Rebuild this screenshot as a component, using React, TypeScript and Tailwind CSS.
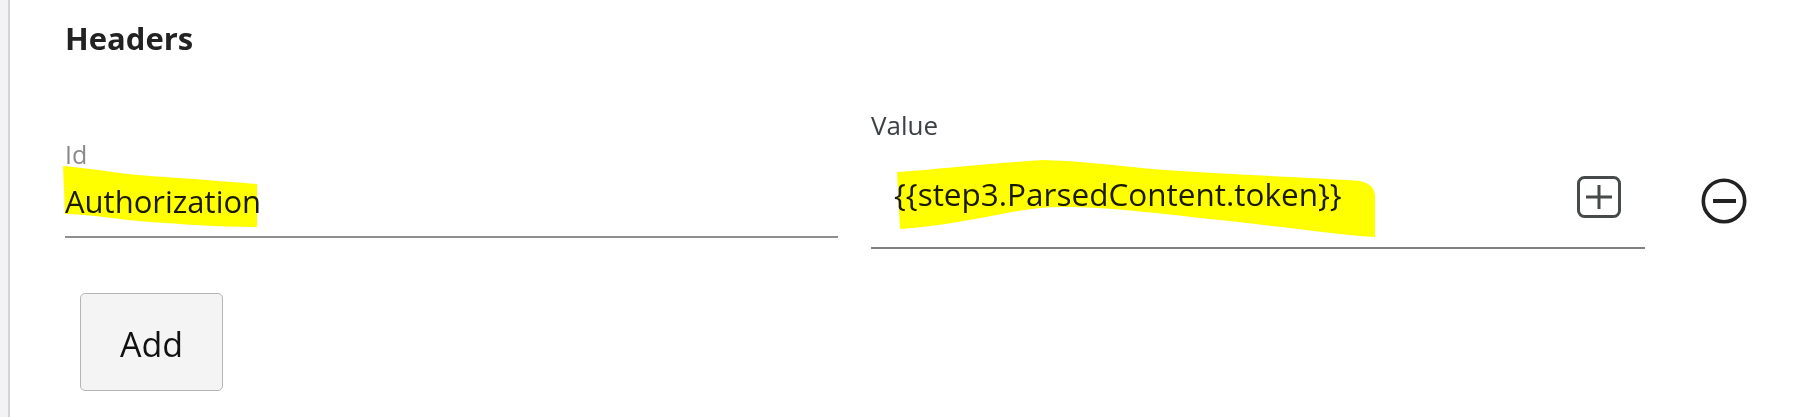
import React from 'react';

function Highlights() {
  return (
    <svg
      className="pointer-events-none absolute left-0 top-0 h-[417px] w-[1814px] mix-blend-multiply"
      viewBox="0 0 1814 417"
    >
      <path
        d="M63,166 C90,168 120,174 150,176 S220,181 257,184 L257,227 C220,227 180,224 150,222 S90,214 65,214 Z"
        fill="#ffff00"
      />
      <path
        d="M897,172 C930,170 980,164 1043,160 C1090,161 1130,168 1180,171 C1260,176 1320,178 1360,181 Q1375,184 1375,197 L1375,237 C1330,234 1280,226 1200,218 C1130,210 1080,205 1040,208 C1000,212 960,225 900,229 Z"
        fill="#ffff00"
      />
    </svg>
  );
}

function PlusBoxIcon() {
  return (
    <svg width="44" height="42" viewBox="0 0 44 42" fill="none">
      <rect x="1.5" y="1.5" width="41" height="39" rx="6" stroke="#464a4b" strokeWidth="3" />
      <path d="M9 21 H35 M22 9 V33" stroke="#464a4b" strokeWidth="3" />
    </svg>
  );
}

function MinusCircleIcon() {
  return (
    <svg width="46" height="46" viewBox="0 0 46 46" fill="none">
      <circle cx="23" cy="23" r="20.7" stroke="#222" strokeWidth="3.6" />
      <path d="M12 23 H35" stroke="#222" strokeWidth="4" />
    </svg>
  );
}

export default function App() {
  return (
    <div className="relative flex h-[417px] w-full bg-white font-['Open_Sans',sans-serif]">
      {/* left gutter */}
      <div className="w-[10px] shrink-0 border-r-2 border-[#d1d5d9] bg-[#f3f3f3]" />

      <div className="flex-1 pl-[55px] pt-[18px]">
        <h2 className="text-[31px] font-bold leading-[40px] text-[#222]">Headers</h2>

        <div className="mt-[42px] flex items-start">
          {/* Id */}
          <div className="w-[773px] pt-[42px]">
            <div className="text-[25px] leading-[24px] text-[#8a8a8a]">Id</div>
            <div className="border-b-2 border-[#8f8f8f] pb-[15px]">
              <div className="mt-[15px] text-[31px] leading-[40px] text-[#1a1a1a]">Authorization</div>
            </div>
          </div>

          {/* Value */}
          <div className="ml-[33px] w-[774px] pt-[9px]">
            <div className="text-[26px] leading-[32px] text-[#3c4146]">Value</div>
            <div className="border-b-2 border-[#7f8185] pb-[29px]">
              <div className="mt-[29px] flex h-[48px] items-center justify-between pl-[23px] pr-[24px]">
                <span className="text-[31.5px] leading-[40px] text-[#1a1a1a]">{'{{step3.ParsedContent.token}}'}</span>
                <button className="mt-[6px]">
                  <PlusBoxIcon />
                </button>
              </div>
            </div>
          </div>

          <button className="ml-[56px] mt-[78px]">
            <MinusCircleIcon />
          </button>
        </div>

        <button className="ml-[15px] mt-[44px] flex h-[98px] w-[143px] items-center justify-center rounded-[5px] border-[1.5px] border-[#b3b6b9] bg-[#f4f4f4] pt-1 text-[34px] text-[#111]">
          Add
        </button>
      </div>

      <Highlights />
    </div>
  );
}
